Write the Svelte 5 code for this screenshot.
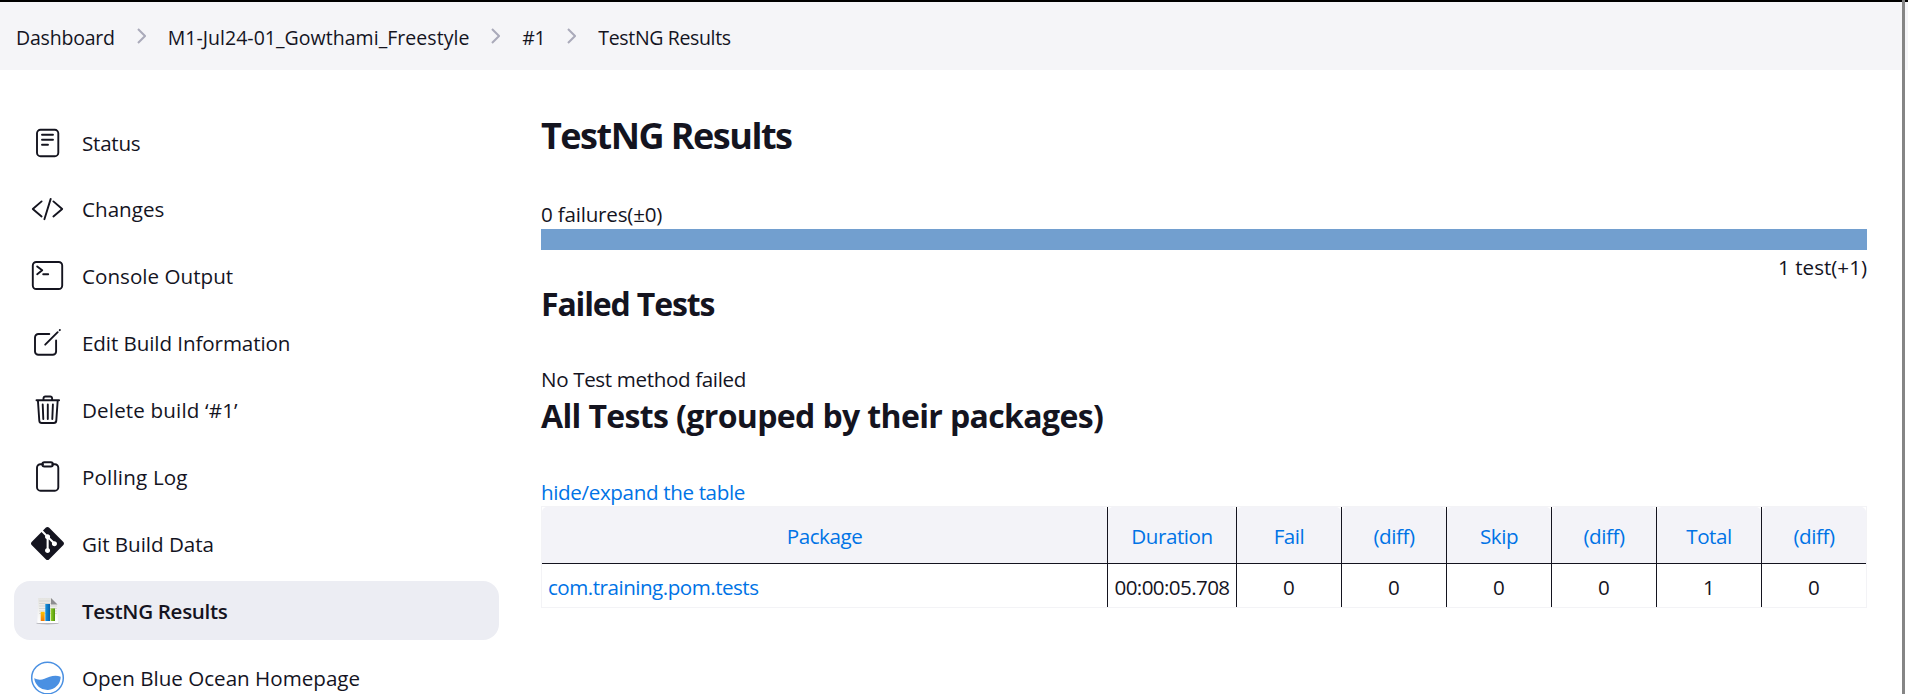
<script>
  const crumbs = [
    { text: 'Dashboard', ls: -0.2 },
    { text: 'M1-Jul24-01_Gowthami_Freestyle', ls: 0.04 },
    { text: '#1', ls: -0.2 },
    { text: 'TestNG Results', ls: -0.35 }
  ];

  const tasks = [
    { icon: 'status', text: 'Status', ls: -0.25 },
    { icon: 'changes', text: 'Changes', ls: 0.02 },
    { icon: 'console', text: 'Console Output', ls: 0.02 },
    { icon: 'edit', text: 'Edit Build Information', ls: -0.09 },
    { icon: 'delete', text: 'Delete build ‘#1’', ls: 0.15 },
    { icon: 'polling', text: 'Polling Log', ls: 0.17 },
    { icon: 'git', text: 'Git Build Data', ls: -0.02 },
    { icon: 'chart', text: 'TestNG Results', ls: -0.33, active: true },
    { icon: 'ocean', text: 'Open Blue Ocean Homepage', ls: 0 }
  ];

  const columns = ['Package', 'Duration', 'Fail', '(diff)', 'Skip', '(diff)', 'Total', '(diff)'];
  const row = ['com.training.pom.tests', '00:00:05.708', '0', '0', '0', '0', '1', '0'];
</script>

<div class="page">
  <header>
    <nav class="crumbs">
      {#each crumbs as crumb, i}
        {#if i > 0}
          <svg class="sep" viewBox="0 0 9 16"><path d="M1 1l7 7-7 7" /></svg>
        {/if}
        <span style:letter-spacing="{crumb.ls}px">{crumb.text}</span>
      {/each}
    </nav>
  </header>

  <div class="body">
    <aside>
      {#each tasks as task}
        <div class="task" class:active={task.active}>
          <svg class="icon" viewBox="0 0 36 36">
            {#if task.icon === 'status'}
              <rect x="8" y="4.8" width="21.3" height="26.4" rx="3.5" />
              <path d="M13 9.8h11M13 14.8h11M13 19.8h6" />
            {:else if task.icon === 'changes'}
              <path d="M12.6 10.4L3.8 18l8.8 7.5M24.4 10.4l8.8 7.6-8.8 7.5M21.7 7.9l-6.3 20.3" />
            {:else if task.icon === 'console'}
              <rect x="3.8" y="4" width="29.4" height="27" rx="3.5" />
              <path d="M8.2 8.4l5 3.9-5 3.9M14.2 16.2h5" />
            {:else if task.icon === 'edit'}
              <path d="M20.3 9H9.4a3.4 3.4 0 0 0-3.4 3.4v14a3.4 3.4 0 0 0 3.4 3.4h14.3a3.4 3.4 0 0 0 3.4-3.4V15.4" />
              <path d="M16.2 19.7L28.7 7.2M30.7 5.2l.2-.2" />
            {:else if task.icon === 'delete'}
              <path d="M7.5 8.3h22.6M8.9 8.3l1.4 20.4a2.5 2.5 0 0 0 2.5 2.3h12a2.5 2.5 0 0 0 2.5-2.3l1.4-20.4" />
              <path d="M14.5 8V6.3a1.8 1.8 0 0 1 1.8-1.8h5a1.8 1.8 0 0 1 1.8 1.8V8M13.7 12.5l.6 14.5M18.8 12.5V27M23.9 12.5L23.3 27" />
            {:else if task.icon === 'polling'}
              <path d="M14 5.2h-2.5A3.5 3.5 0 0 0 8 8.7v19.5a3.5 3.5 0 0 0 3.5 3.5h14.3a3.5 3.5 0 0 0 3.5-3.5V8.7a3.5 3.5 0 0 0-3.5-3.5h-2.5" />
              <rect x="13.3" y="3.2" width="10.6" height="4.3" rx="2.1" />
            {:else if task.icon === 'git'}
              <path
                class="solid"
                transform="translate(2 1) scale(1.375)"
                d="M23.546 10.93L13.067.452c-.604-.603-1.582-.603-2.188 0L8.708 2.627l2.76 2.76c.645-.215 1.379-.07 1.889.441.516.515.658 1.258.438 1.9l2.658 2.66c.645-.223 1.387-.078 1.9.435.721.72.721 1.884 0 2.604-.719.719-1.881.719-2.6 0-.539-.541-.674-1.337-.404-1.996L12.86 8.955v6.525c.176.086.342.203.488.348.713.721.713 1.883 0 2.6-.719.721-1.889.721-2.609 0-.719-.719-.719-1.879 0-2.598.182-.18.387-.316.605-.406V8.835c-.217-.091-.424-.222-.6-.401-.545-.545-.676-1.342-.396-2.009L7.636 3.7.45 10.881c-.6.605-.6 1.584 0 2.189l10.48 10.477c.604.604 1.582.604 2.186 0l10.43-10.43c.605-.603.605-1.582 0-2.187"
              />
            {:else if task.icon === 'chart'}
              <defs>
                <linearGradient id="paper" x1="0" y1="0" x2="0" y2="1">
                  <stop offset="0" stop-color="#e4e4e1" /><stop offset="1" stop-color="#fff" />
                </linearGradient>
                <linearGradient id="orange" x1="0" y1="0" x2="0" y2="1">
                  <stop offset="0" stop-color="#fdc500" /><stop offset="1" stop-color="#f0780a" />
                </linearGradient>
                <linearGradient id="blue"><stop offset="0" stop-color="#1593e0" /><stop offset="1" stop-color="#0560aa" /></linearGradient>
                <linearGradient id="green"><stop offset="0" stop-color="#93cf2a" /><stop offset="1" stop-color="#4f9508" /></linearGradient>
              </defs>
              <g class="plain">
                <ellipse cx="18.5" cy="30.2" rx="11.3" ry="1.3" fill="#b8b8bd" />
                <path d="M9.2 5h12.8l6.3 6.3L29 30H8.3z" fill="url(#paper)" />
                <path class="rules" d="M10.5 8h10M10.5 10.5h11M10.5 13h17M10.5 15.5h17M10.5 18h17M10.5 20.5h17" />
                <path d="M22 5l6.5 6.5H22z" fill="#8d8d8f" />
                <path d="M11.7 18.8h4V28h-4z" fill="url(#orange)" />
                <path d="M16.3 11h4.7v17h-4.7z" fill="url(#blue)" />
                <path d="M21.7 15.4H26V28h-4.3z" fill="url(#green)" />
              </g>
            {:else}
              <circle class="ring" cx="18.5" cy="18" r="15.8" />
              <path class="wave" d="M5.2 18.3C8.5 20 11.8 20.3 15.5 18.8C20 17 25.5 14.3 31.7 16.8A13.3 13.3 0 0 1 5.2 18.3z" />
            {/if}
          </svg>
          <span style:letter-spacing="{task.ls}px">{task.text}</span>
        </div>
      {/each}
    </aside>

    <main>
      <h1>TestNG Results</h1>
      <p class="failures">0 failures(±0)</p>
      <div class="bar"></div>
      <p class="total">1 test(+1)</p>
      <h2 class="failed">Failed Tests</h2>
      <p class="none">No Test method failed</p>
      <h2 class="all">All Tests (grouped by their packages)</h2>
      <p class="toggle"><a href="#table">hide/expand the table</a></p>
      <table>
        <colgroup>
          <col class="c-package" /><col class="c-duration" /><col /><col /><col /><col /><col /><col class="c-last" />
        </colgroup>
        <thead>
          <tr>
            {#each columns as column}<th><div><a href="#sort">{column}</a></div></th>{/each}
          </tr>
        </thead>
        <tbody>
          <tr>
            {#each row as cell, i}
              <td>{#if i === 0}<a href="#package">{cell}</a>{:else}{cell}{/if}</td>
            {/each}
          </tr>
        </tbody>
      </table>
    </main>
  </div>
  <div class="edge"></div>
</div>

<style>
  :global(body) {
    margin: 0;
    overflow: hidden;
  }
  .page {
    position: relative;
    box-sizing: border-box;
    height: 694px;
    overflow: hidden;
    background: #fff;
    color: #14141f;
    font: 20.6px 'Open Sans', 'Noto Sans', sans-serif;
  }
  header {
    box-sizing: border-box;
    height: 70px;
    border-top: 2px solid #000;
    background: #f5f5f8;
  }
  .crumbs {
    display: flex;
    align-items: center;
    gap: 21.9px;
    height: 68px;
    padding-left: 16px;
    font-size: 19.5px;
    line-height: 28px;
    white-space: nowrap;
  }
  .crumbs span {
    padding-top: 3px;
  }
  .sep {
    width: 9px;
    height: 16px;
    fill: none;
    stroke: #aaaaba;
    stroke-width: 2;
  }
  .body {
    display: flex;
  }
  aside {
    display: flex;
    flex-direction: column;
    flex: none;
    gap: 7.9px;
    box-sizing: border-box;
    width: 541px;
    padding: 43px 42px 0 14px;
  }
  .task {
    display: flex;
    align-items: center;
    flex: none;
    gap: 17px;
    height: 59px;
    padding-left: 15px;
    border-radius: 16px;
    white-space: nowrap;
  }
  .task span {
    line-height: 28px;
  }
  .active {
    background: #ecedf3;
    font-weight: 600;
  }
  .icon {
    flex: none;
    width: 36px;
    height: 36px;
    fill: none;
    stroke: #14141f;
    stroke-width: 1.9;
    stroke-linecap: round;
    stroke-linejoin: round;
  }
  .solid {
    fill: #14141f;
    stroke: none;
  }
  .plain {
    stroke: none;
  }
  .rules {
    stroke: #cfcfcd;
    stroke-width: 0.8;
  }
  .ring {
    fill: #fff;
    stroke: #4a90e2;
    stroke-width: 1.5;
  }
  .wave {
    fill: #4a90e2;
    stroke: none;
  }
  main {
    width: 1326px;
    padding-top: 42px;
  }
  h1,
  h2,
  p {
    margin: 0;
    white-space: nowrap;
  }
  h1 {
    font-size: 36px;
    line-height: 48px;
    letter-spacing: -1.5px;
  }
  h2 {
    margin-top: 1px;
    font-size: 32px;
    line-height: 44px;
  }
  p {
    line-height: 28px;
    letter-spacing: -0.36px;
  }
  a {
    color: #0073e6;
    text-decoration: none;
  }
  .failures {
    margin-top: 39px;
    line-height: 30px;
    letter-spacing: -0.2px;
  }
  .bar {
    height: 21px;
    background: #729fcf;
  }
  .total {
    margin-top: 3px;
    letter-spacing: 0;
    text-align: right;
  }
  .failed {
    letter-spacing: -1.15px;
  }
  .none {
    margin-top: 39px;
  }
  .all {
    letter-spacing: -0.63px;
  }
  .toggle {
    margin-top: 40px;
  }
  table {
    width: 1326px;
    table-layout: fixed;
    border: 1px solid #f3f3f6;
    border-spacing: 0;
    text-align: center;
  }
  col {
    width: 105px;
  }
  .c-package {
    width: 566px;
  }
  .c-duration {
    width: 129px;
  }
  .c-last {
    width: 104px;
  }
  th,
  td {
    padding: 0;
    border-right: 1px solid #14141f;
  }
  th:last-child,
  td:last-child {
    border-right: 0;
  }
  th {
    border-bottom: 1px solid #14141f;
    font-weight: 400;
    letter-spacing: -0.45px;
  }
  th div {
    box-sizing: border-box;
    height: 56px;
    padding-top: 1px;
    border-radius: 5px 5px 0 0;
    background: #f3f3f8;
    line-height: 56px;
  }
  td {
    box-sizing: border-box;
    height: 43px;
    padding-top: 2px;
    line-height: 38px;
  }
  td:first-child {
    padding-left: 6px;
    text-align: left;
    letter-spacing: -0.5px;
  }
  td:nth-child(2) {
    letter-spacing: -0.6px;
  }
  .edge {
    position: absolute;
    top: 0;
    bottom: 0;
    left: 1902px;
    width: 3px;
    background: #858585;
  }
</style>
